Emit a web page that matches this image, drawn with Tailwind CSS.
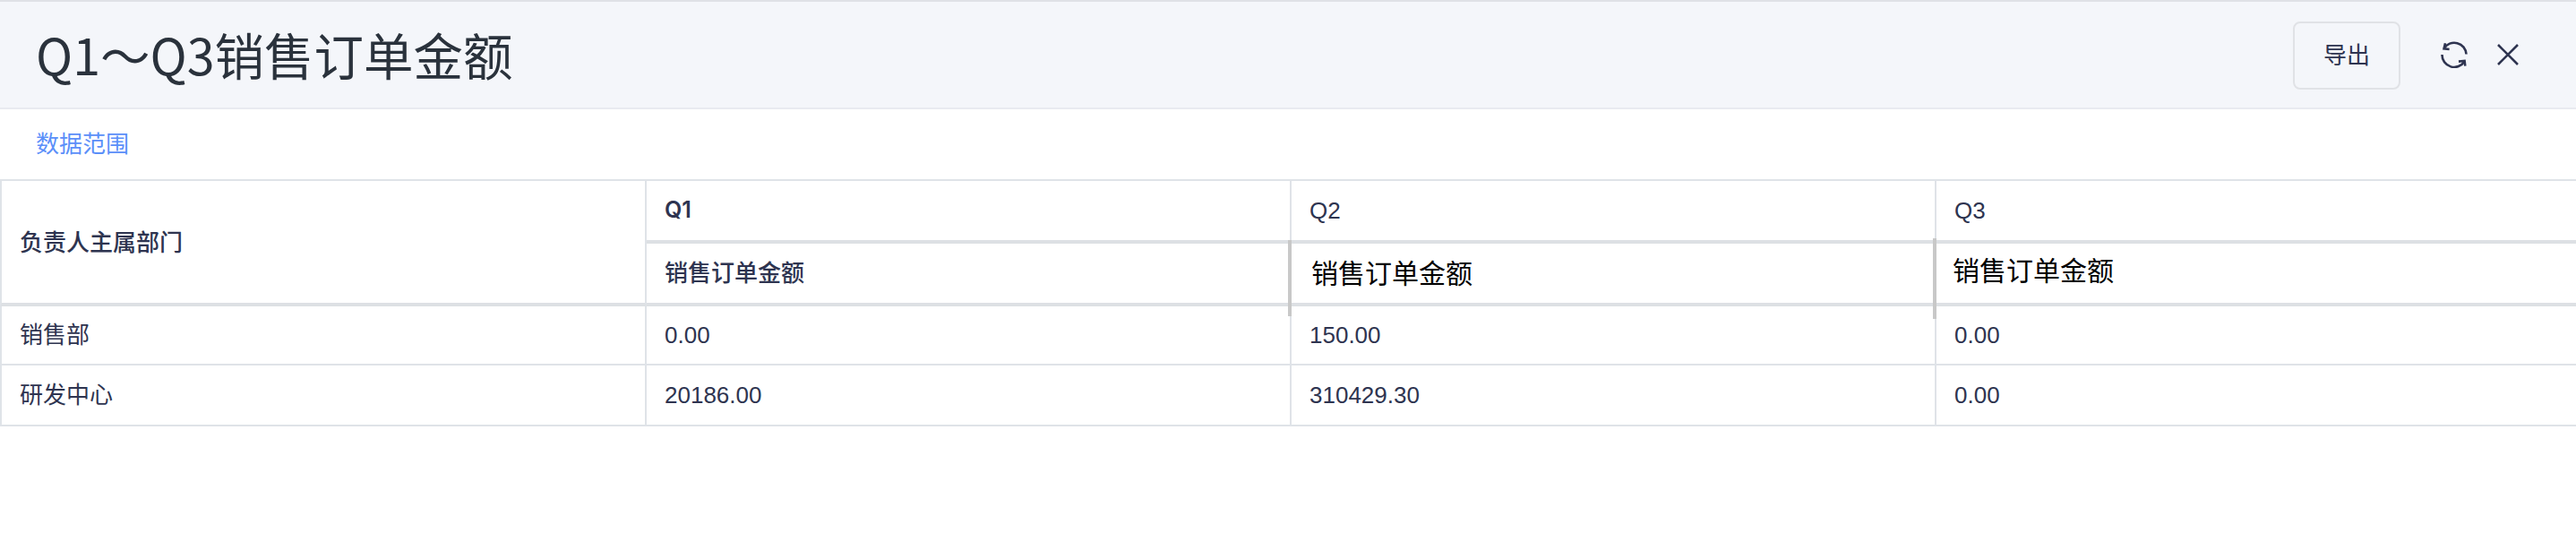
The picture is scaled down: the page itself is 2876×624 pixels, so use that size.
<!DOCTYPE html>
<html lang="zh-CN">
  <head>
    <meta charset="UTF-8" />
    <title>Q1～Q3销售订单金额</title>
    <script src="https://cdn.jsdelivr.net/npm/@tailwindcss/browser@4"></script>
  </head>
  <body class="bg-white overflow-hidden font-['Liberation_Sans','Noto_Sans_CJK_SC',sans-serif] text-[26px] text-[#2e3450]">
    <!-- Header -->
    <header class="h-[122px] flex items-center justify-between pl-[40px] pr-[64px] bg-[#f4f6fa] border-t-2 border-t-[#dfe1e6] border-b-2 border-b-[#e8eaf0]">
      <h1 class="text-[55.5px] font-['Noto_Sans_CJK_SC',sans-serif] font-normal leading-none text-[#2a323c]">Q1～Q3销售订单金额</h1>
      <div class="flex items-center">
        <button class="w-[120px] h-[76px] mt-[2px] border-2 border-[#e0e2e6] rounded-lg text-[26px]">导出</button>
        <svg class="w-[30px] h-[30px] ml-[45px]" viewBox="0 0 30 30" fill="none" stroke="#2e3450" stroke-width="2.6">
          <path d="M3.6 8A13.5 13.5 0 0 1 28.5 14.5" />
          <path d="M5 2.3 3.6 8.4 9.6 9" />
          <path d="M1.5 15A13.5 13.5 0 0 0 26.5 22.5" />
          <path d="M20 22.6 26.6 22 27.3 27.6" />
        </svg>
        <svg class="w-[24px] h-[24px] ml-[33px]" viewBox="0 0 24 24" fill="none" stroke="#2e3450" stroke-width="2.6">
          <path d="M1 1 23 23M23 1 1 23" />
        </svg>
      </div>
    </header>

    <!-- Data range link -->
    <div class="h-[78px] flex items-center pl-[40px]">
      <a class="text-[#5b8ff9]">数据范围</a>
    </div>

    <!-- Table -->
    <div class="relative">
      <table class="w-full table-fixed border-separate border-spacing-0 text-left">
        <colgroup>
          <col class="w-[722px]" />
          <col class="w-[720px]" />
          <col class="w-[720px]" />
          <col />
        </colgroup>
        <thead>
          <tr class="h-[72px]">
            <th rowspan="2" class="px-5 pt-[2px] font-medium border-l-2 border-t-2 border-r-2 border-b-4 border-l-[#dfe3e8] border-t-[#dfe3e8] border-r-[#dfe3e8] border-b-[#dde0e4]">负责人主属部门</th>
            <th class="px-5 font-['Inter','Noto_Sans_CJK_SC',sans-serif] font-semibold text-[25px] border-t-2 border-r-2 border-b-4 border-t-[#dfe3e8] border-r-[#dfe3e8] border-b-[#dde0e4]">Q1</th>
            <th class="px-5 font-medium border-t-2 border-r-2 border-b-4 border-t-[#dfe3e8] border-r-[#dfe3e8] border-b-[#dde0e4]">Q2</th>
            <th class="px-5 font-medium border-t-2 border-b-4 border-t-[#dfe3e8] border-b-[#dde0e4]">Q3</th>
          </tr>
          <tr class="h-[70px]">
            <th class="px-5 font-medium border-r-2 border-b-4 border-r-[#dfe3e8] border-b-[#dde0e4]">销售订单金额</th>
            <th class="pl-[22px] font-normal text-[30px] text-black border-r-2 border-b-4 border-r-[#dfe3e8] border-b-[#dde0e4]">销售订单金额</th>
            <th class="pl-[18px] pb-[6px] font-normal text-[30px] text-black border-b-4 border-b-[#dde0e4]">销售订单金额</th>
          </tr>
        </thead>
        <tbody>
          <tr class="h-[66px]">
            <td class="px-5 border-l-2 border-r-2 border-b-2 border-[#dfe3e8]">销售部</td>
            <td class="px-5 border-r-2 border-b-2 border-[#dfe3e8]">0.00</td>
            <td class="px-5 border-r-2 border-b-2 border-[#dfe3e8]">150.00</td>
            <td class="px-5 border-b-2 border-[#dfe3e8]">0.00</td>
          </tr>
          <tr class="h-[68px]">
            <td class="px-5 border-l-2 border-r-2 border-b-2 border-[#dfe3e8]">研发中心</td>
            <td class="px-5 border-r-2 border-b-2 border-[#dfe3e8]">20186.00</td>
            <td class="px-5 border-r-2 border-b-2 border-[#dfe3e8]">310429.30</td>
            <td class="px-5 border-b-2 border-[#dfe3e8]">0.00</td>
          </tr>
        </tbody>
      </table>
      <!-- Column resize handles -->
      <div class="absolute left-[1438px] top-[68px] w-[4px] h-[85px] bg-[#c8c8c8]"></div>
      <div class="absolute left-[2158px] top-[66px] w-[4px] h-[90px] bg-[#c8c8c8]"></div>
    </div>
  </body>
</html>
